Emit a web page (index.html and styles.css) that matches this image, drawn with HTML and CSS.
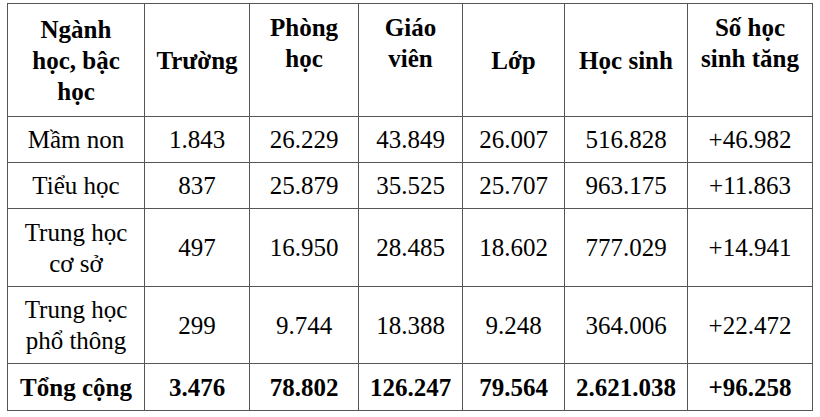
FILE: index.html
```html
<!DOCTYPE html>
<html lang="vi">
<head>
<meta charset="utf-8">
<link rel="stylesheet" href="styles.css">
</head>
<body>
<table class="stats">
  <colgroup>
    <col class="c1"><col class="c2"><col class="c3"><col class="c4"><col class="c5"><col class="c6"><col class="c7">
  </colgroup>
  <tr class="r-head">
    <th>Ngành<br>học, bậc<br>học</th>
    <th>Trường</th>
    <th class="top">Phòng<br>học</th>
    <th class="top">Giáo<br>viên</th>
    <th>Lớp</th>
    <th>Học sinh</th>
    <th class="top">Số học<br>sinh tăng</th>
  </tr>
  <tr class="r-one">
    <td>Mầm non</td><td>1.843</td><td>26.229</td><td>43.849</td><td>26.007</td><td>516.828</td><td>+46.982</td>
  </tr>
  <tr class="r-one">
    <td>Tiểu học</td><td>837</td><td>25.879</td><td>35.525</td><td>25.707</td><td>963.175</td><td>+11.863</td>
  </tr>
  <tr class="r-two">
    <td>Trung học<br>cơ sở</td><td>497</td><td>16.950</td><td>28.485</td><td>18.602</td><td>777.029</td><td>+14.941</td>
  </tr>
  <tr class="r-two b">
    <td>Trung học<br>phổ thông</td><td>299</td><td>9.744</td><td>18.388</td><td>9.248</td><td>364.006</td><td>+22.472</td>
  </tr>
  <tr class="r-total">
    <td>Tổng cộng</td><td>3.476</td><td>78.802</td><td>126.247</td><td>79.564</td><td>2.621.038</td><td>+96.258</td>
  </tr>
</table>
</body>
</html>
```

FILE: styles.css
```css
html, body {
  margin: 0;
  background: #ffffff;
}
body {
  padding: 3px 0 0 7px;
  font-family: "Liberation Serif", "Times New Roman", serif;
  color: #000;
  overflow: hidden;
}
.stats {
  border-collapse: collapse;
  table-layout: fixed;
  width: 806px;
  font-size: 25px;
  line-height: 31px;
}
.c1 { width: 137px; }
.c2 { width: 105px; }
.c3 { width: 109px; }
.c4 { width: 104px; }
.c5 { width: 102px; }
.c6 { width: 123px; }
.c7 { width: 125px; }
.stats th,
.stats td {
  border: 1px solid #555;
  text-align: center;
  vertical-align: middle;
  padding: 0 2px;
  white-space: nowrap;
}
.stats th { font-weight: bold; }
.stats th.top { vertical-align: top; padding-top: 8px; }
.r-head { height: 113px; }
.r-one { height: 46px; }
.r-two { height: 78px; }
.r-two.b { height: 77px; }
.r-total { height: 47px; }
.r-total td { font-weight: bold; }
```
